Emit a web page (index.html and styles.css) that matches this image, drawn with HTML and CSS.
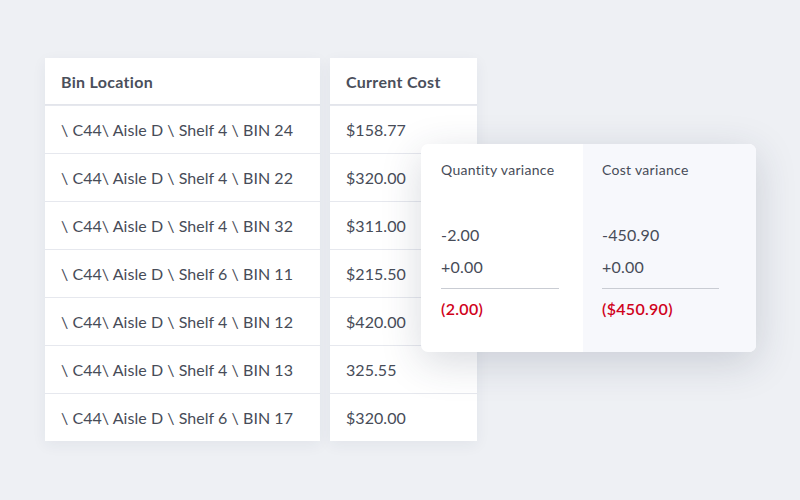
FILE: index.html
```html
<!DOCTYPE html>
<html lang="en">
<head>
  <meta charset="UTF-8">
  <title>Bin variance</title>
  <link rel="stylesheet" href="styles.css">
</head>
<body>
  <div class="stage">
    <div class="tables">
      <div class="col col-bin">
        <div class="cell head">Bin Location</div>
        <div class="cell">\ C44\ Aisle D \ Shelf 4 \ BIN 24</div>
        <div class="cell">\ C44\ Aisle D \ Shelf 4 \ BIN 22</div>
        <div class="cell">\ C44\ Aisle D \ Shelf 4 \ BIN 32</div>
        <div class="cell">\ C44\ Aisle D \ Shelf 6 \ BIN 11</div>
        <div class="cell">\ C44\ Aisle D \ Shelf 4 \ BIN 12</div>
        <div class="cell">\ C44\ Aisle D \ Shelf 4 \ BIN 13</div>
        <div class="cell">\ C44\ Aisle D \ Shelf 6 \ BIN 17</div>
      </div>
      <div class="col col-cost">
        <div class="cell head">Current Cost</div>
        <div class="cell">$158.77</div>
        <div class="cell">$320.00</div>
        <div class="cell">$311.00</div>
        <div class="cell">$215.50</div>
        <div class="cell">$420.00</div>
        <div class="cell">325.55</div>
        <div class="cell">$320.00</div>
      </div>
    </div>

    <div class="popup">
      <div class="pane">
        <div class="pane-title">Quantity variance</div>
        <div class="val">-2.00</div>
        <div class="val">+0.00</div>
        <div class="total">(2.00)</div>
      </div>
      <div class="pane pane-alt">
        <div class="pane-title">Cost variance</div>
        <div class="val">-450.90</div>
        <div class="val">+0.00</div>
        <div class="total">($450.90)</div>
      </div>
    </div>
  </div>
</body>
</html>
```
FILE: styles.css
```css
body { margin: 0; background: #eef0f4; font-family: Lato, "Open Sans", sans-serif; color: #474c58; }
.stage { position: relative; width: 800px; height: 500px; }
.tables { display: flex; gap: 10px; padding: 58px 0 0 45px; }
.col { background: #fff; box-shadow: 0 4px 14px rgba(40,50,80,0.06); }
.col-bin { width: 275px; }
.col-cost { width: 147px; }
.cell { height: 47px; line-height: 48px; padding-left: 16px; font-size: 16px; letter-spacing: 0.05px; border-top: 1px solid #e6e8ee; }
.cell.head { height: 46px; line-height: 48px; border-top: none; border-bottom: 1px solid #e3e5eb; font-weight: 700; letter-spacing: 0.3px; color: #4a4f5b; }
.popup { position: absolute; left: 421px; top: 144px; width: 335px; height: 208px; display: flex; border-radius: 7px; overflow: hidden; background: #fff; box-shadow: 0 10px 40px rgba(40,50,80,0.18); }
.pane { width: 162px; box-sizing: border-box; padding: 17px 20px 0 20px; }
.pane-alt { flex: 1; background: #f7f8fc; padding-left: 19px; }
.pane-title { font-size: 14px; letter-spacing: 0.3px; height: 58px; }
.val { font-size: 16px; height: 32px; line-height: 31px; letter-spacing: 0.2px; }
.pane:first-child .val, .pane:first-child .total { width: 118px; }
.pane-alt .val, .pane-alt .total { width: 117px; }
.val + .total { border-top: 1px solid #c9ccd3; margin-top: 5px; padding-top: 10px; font-size: 16px; letter-spacing: 0.3px; color: #d0021b; font-weight: 600; }
```
